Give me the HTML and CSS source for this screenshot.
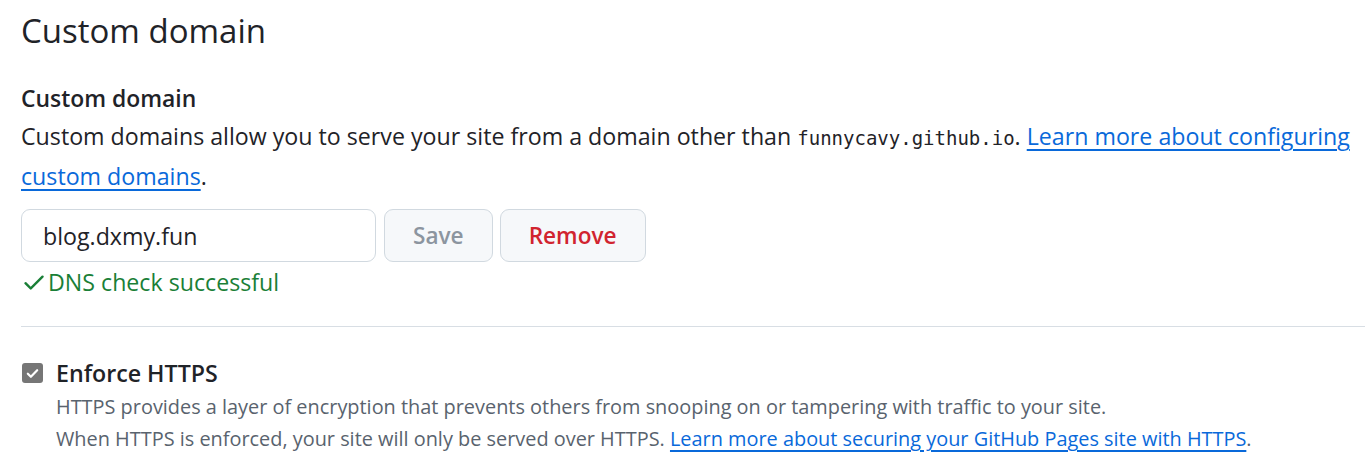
FILE: index.html
```html
<!DOCTYPE html>
<html lang="en">
<head>
<meta charset="utf-8">
<title>Custom domain</title>
<link rel="stylesheet" href="styles.css">
</head>
<body>
<div class="settings">
  <h2 class="subhead">Custom domain</h2>

  <section class="domain">
    <h3 class="label">Custom domain</h3>
    <p class="desc">Custom domains allow you to serve your site from a domain other than <code>funnycavy.github.io</code>. <a href="#">Learn more about configuring custom domains</a>.</p>

    <form class="domain-form">
      <input class="domain-input" type="text" value="blog.dxmy.fun" aria-label="Custom domain">
      <button class="btn btn-save" type="button" disabled>Save</button>
      <button class="btn btn-remove" type="button">Remove</button>
    </form>

    <div class="dns-ok">
      <svg class="check-icon" viewBox="0 0 16 16" aria-hidden="true"><path d="M13.78 4.22a.75.75 0 0 1 0 1.06l-7.25 7.25a.75.75 0 0 1-1.06 0L2.22 9.28a.751.751 0 0 1 .018-1.042.751.751 0 0 1 1.042-.018L6 10.94l6.72-6.72a.75.75 0 0 1 1.06 0Z"/></svg>
      <span>DNS check successful</span>
    </div>
  </section>

  <hr class="divider">

  <section class="https">
    <div class="check-row">
      <span class="checkbox" aria-hidden="true">
        <svg viewBox="0 0 20 20"><path d="M4.5 10.2l3.6 3.6 7.4-7.6" fill="none" stroke="#fff" stroke-width="2.6" stroke-linecap="round" stroke-linejoin="round"/></svg>
      </span>
      <span class="check-label">Enforce HTTPS</span>
    </div>
    <p class="note">HTTPS provides a layer of encryption that prevents others from snooping on or tampering with traffic to your site.<br>When HTTPS is enforced, your site will only be served over HTTPS. <a href="#">Learn more about securing your GitHub Pages site with HTTPS</a>.</p>
  </section>
</div>
</body>
</html>
```

FILE: styles.css
```css
* { box-sizing: border-box; }

body {
  margin: 0;
  background: #ffffff;
  color: #1f2328;
  font-family: "Open Sans", "Noto Sans", sans-serif;
}

.settings {
  padding: 7px 5px 0 21px;
}

.subhead {
  margin: 0;
  font-size: 33px;
  font-weight: 400;
  line-height: 48px;
}

.domain {
  margin-top: 26px;
}

.label {
  margin: 0;
  font-size: 22.9px;
  font-weight: 600;
  line-height: 36px;
}

.desc {
  margin: 0;
  font-size: 23.2px;
  line-height: 38px;
}

.desc code {
  font-family: "DejaVu Sans Mono", "Liberation Mono", monospace;
  font-size: 19px;
}

a {
  color: #0969da;
  text-decoration: underline;
  text-decoration-thickness: 2px;
  text-underline-offset: 4px;
}

.domain-form {
  display: flex;
  align-items: stretch;
  margin: 14px 0 0;
  height: 53px;
}

.domain-input {
  width: 355px;
  margin: 0 8px 0 0;
  padding: 0 12px 0 21px;
  border: 1px solid #d1d9e0;
  border-radius: 9px;
  font-family: inherit;
  font-size: 23.2px;
  color: #1f2328;
  background: #fff;
  outline: none;
}

.btn {
  margin: 0;
  padding: 0 28px;
  border: 1px solid #d1d9e0;
  border-radius: 9px;
  background: #f6f8fa;
  font-family: inherit;
  font-size: 22.6px;
  font-weight: 600;
}

.btn-save {
  color: #8c959f;
  margin-right: 7px;
}

.btn-remove {
  color: #d1242f;
}

.dns-ok {
  display: flex;
  align-items: center;
  gap: 1px;
  margin-top: 2px;
  color: #1a7f37;
  font-size: 23.2px;
  line-height: 36px;
}

.check-icon {
  width: 26px;
  height: 26px;
  fill: #1a7f37;
  flex: none;
}

.divider {
  margin: 26px 0 0;
  border: 0;
  border-top: 1px solid #d8dee4;
  height: 0;
}

.https {
  margin-top: 28px;
}

.check-row {
  display: flex;
  align-items: center;
  line-height: 36px;
}

.checkbox {
  display: flex;
  align-items: center;
  justify-content: center;
  width: 21px;
  height: 20px;
  margin-left: 1px;
  border-radius: 3px;
  background: #767676;
}

.checkbox svg {
  width: 17px;
  height: 17px;
}

.check-label {
  margin-left: 13px;
  font-size: 23.2px;
  font-weight: 600;
}

.note {
  margin: 0;
  padding-left: 35px;
  color: #59636e;
  font-size: 19.9px;
  line-height: 32px;
}
```
